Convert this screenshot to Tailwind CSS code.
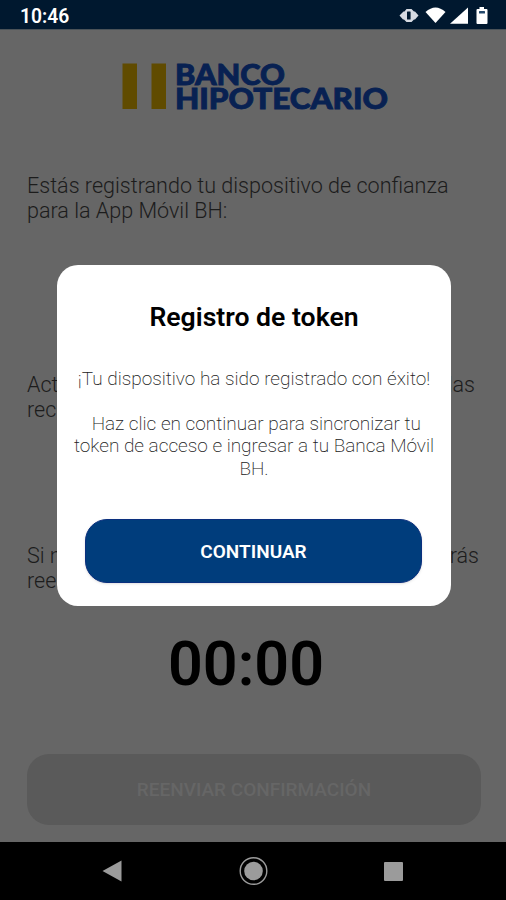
<!doctype html>
<html lang="es">
<head>
    <title>Banco Hipotecario</title>
    <meta charset="utf-8" />
    <meta name="viewport" content="width=device-width, initial-scale=1.0" />
    <script src="https://cdn.jsdelivr.net/npm/@tailwindcss/browser@4"></script>
</head>
<body class="bg-black">
    <div class="relative flex flex-col w-[506px] h-[900px] overflow-hidden bg-[#666666] font-['Roboto',sans-serif]">
        <!-- Status bar -->
        <header class="flex items-center justify-between h-[30px] pl-5 pr-[17px] bg-[#00182f] border-b border-[#4a5258] text-white">
            <span class="pt-1 text-[19.3px] leading-none font-semibold">10:46</span>
            <svg class="mt-[2px]" width="90" height="20" viewBox="0 0 90 20" fill="#fff">
                <path d="M0.500 9.500 4.500 5.500h1L7.500 3h5L15 5.500h1L19.500 9.500 16 13.500h-1L12.500 16H7.500L5 13.500h-1z" fill="#d6dae2" />
                <rect x="8" y="5.500" width="3.600" height="8" rx="0.500" fill="#00182f" />
                <path d="M26.500 6Q36.500-3 46.500 6L36.500 17z" />
                <path d="M51 17.800 69 1.500V17.800z" />
                <path d="M80.500 1h4.500v2h2.500a1 1 0 0 1 1 1V17a1 1 0 0 1-1 1h-9a1 1 0 0 1-1-1V4a1 1 0 0 1 1-1h2z" />
                <rect x="80" y="5" width="6" height="2.500" rx="0.500" fill="#24496c" />
            </svg>
        </header>

        <main class="flex flex-col h-[812px] px-[27px]">
            <svg class="shrink-0 mt-[32px] ml-[95px]" width="270" height="50" viewBox="0 0 270 50">
                <path d="M0.500 1.500h14.500v45.500H0.500zM29.500 1.500h14.500v45.500H29.500z" fill="#604b00" />
                <g fill="#082152" stroke="#082152" stroke-width="0.900" font-family="Lato, sans-serif" font-weight="900" font-size="29">
                    <text x="53" y="22.500" textLength="110" lengthAdjust="spacingAndGlyphs">BANCO</text>
                    <text x="53" y="46.500" textLength="213" lengthAdjust="spacingAndGlyphs">HIPOTECARIO</text>
                </g>
            </svg>

            <div class="mt-[61px] h-[199px] text-[21.55px] leading-[25px] font-light text-[#1c1c1c]">
                <p>Estás registrando tu dispositivo de confianza<br>para la App Móvil BH:</p>
            </div>
            <div class="h-[171px] w-[448px] text-[21.55px] leading-[25px] font-light text-[#1c1c1c]">
                <p class="flex justify-between"><span>Activa las notificaciones</span><span>para que puedas</span></p>
                <p>recibirla</p>
            </div>
            <div class="h-[91px] w-[452px] text-[21.55px] leading-[25px] font-light text-[#1c1c1c]">
                <p class="flex justify-between"><span>Si no recibes la confirmación</span><span>podrás</span></p>
                <p>reenviarla</p>
            </div>
            <p class="pr-[14px] text-center text-[61px] leading-[60px] font-semibold text-black">00:00</p>
            <button class="shrink-0 mt-[59.5px] h-[71px] w-[454px] pt-[3px] rounded-[22px] bg-[#5a5a5a] text-[19px] font-medium text-[#666666]">REENVIAR CONFIRMACIÓN</button>
        </main>

        <!-- Navigation bar -->
        <nav class="flex items-center justify-between h-[58px] pl-[102px] pr-[103px] bg-black">
            <svg width="20" height="22" viewBox="0 0 20 22" fill="#9b9b9b"><path d="M0.500 11 19.500 0.500v21z" /></svg>
            <svg width="30" height="30" viewBox="0 0 30 30">
                <circle cx="15.500" cy="15" r="13.300" fill="none" stroke="#9b9b9b" stroke-width="1.400" />
                <circle cx="15.500" cy="15" r="9.300" fill="#9b9b9b" />
            </svg>
            <span class="size-[19px] rounded-[1px] bg-[#9b9b9b]"></span>
        </nav>

        <!-- Dialog -->
        <div class="absolute left-[57px] top-[265px] flex flex-col items-center w-[394px] h-[341px] rounded-[21px] bg-white text-center">
            <h1 class="mt-[36px] text-[26.6px] leading-[32px] font-semibold text-black">Registro de token</h1>
            <p class="mt-[34.5px] text-[19px] leading-[22.5px] font-extralight text-[#222222] whitespace-nowrap">¡Tu dispositivo ha sido registrado con éxito!<br><br>&nbsp;Haz clic en continuar para sincronizar tu<br>token de acceso e ingresar a tu Banca Móvil<br>BH.</p>
            <button class="mt-[39px] mr-px h-[64px] w-[337px] shrink-0 pt-[3px] rounded-[22px] bg-[#003d7c] border border-[#0a2f7e] shadow-sm text-[19px] font-semibold text-white">CONTINUAR</button>
        </div>
    </div>
</body>
</html>
